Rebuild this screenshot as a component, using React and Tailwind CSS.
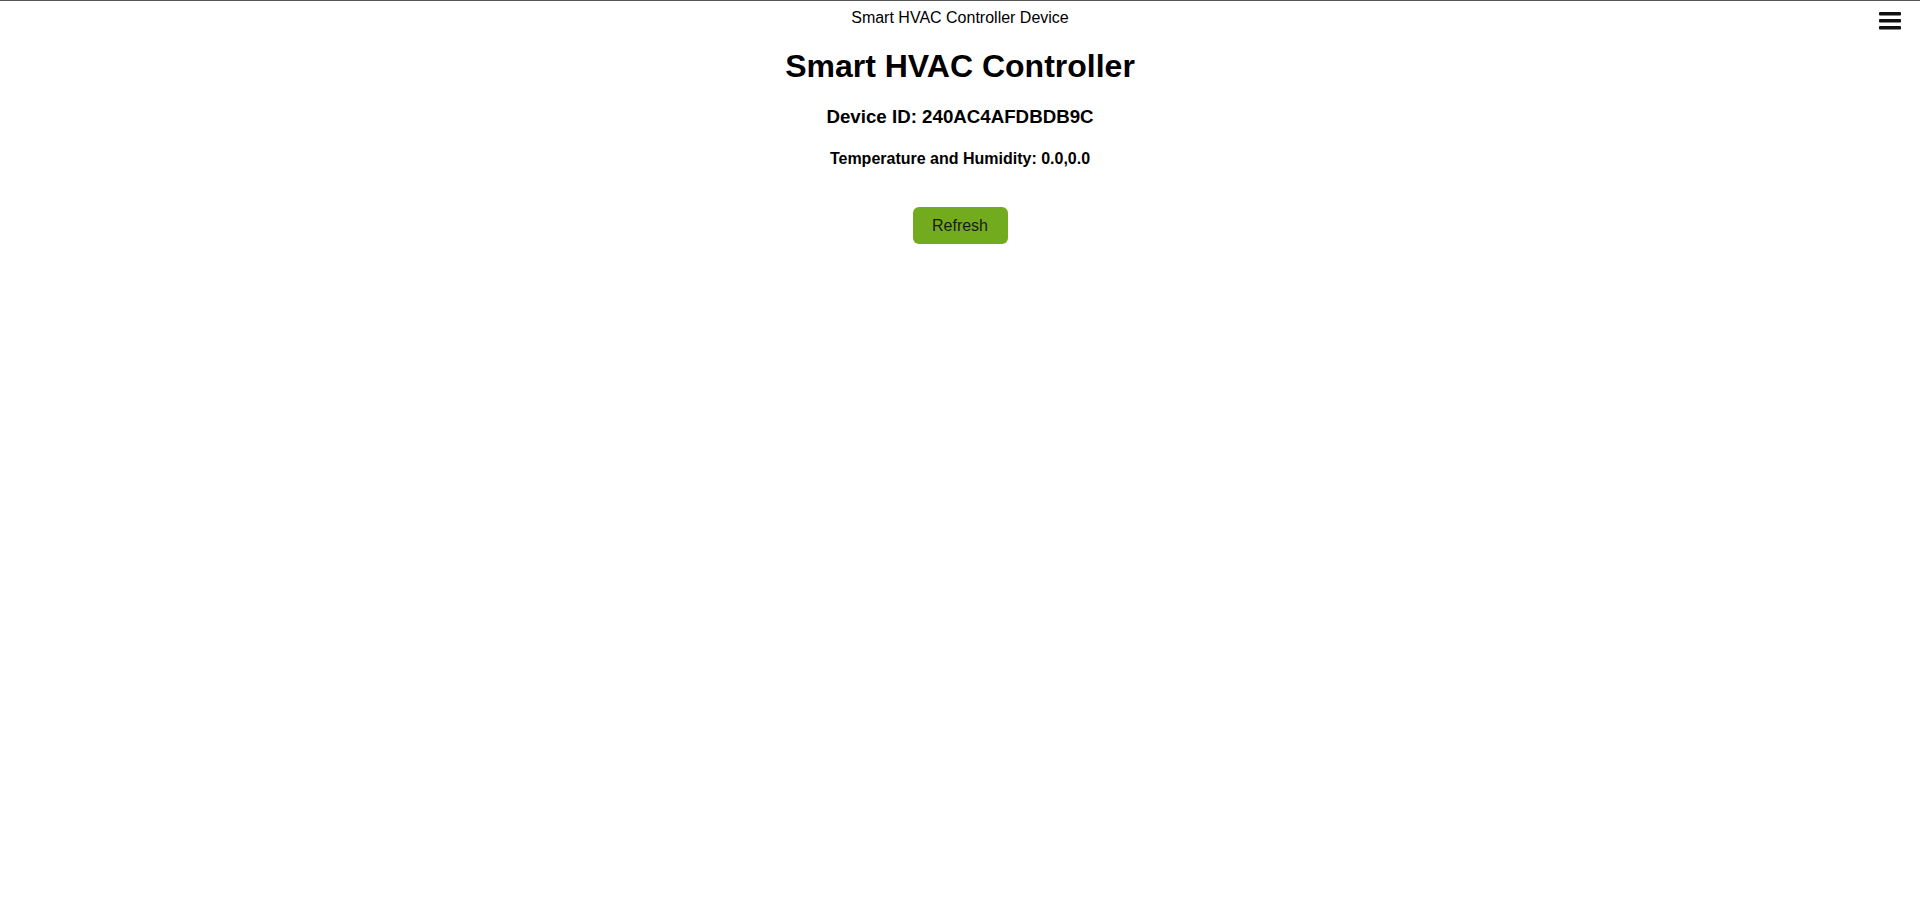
import React from "react";

function MenuIcon() {
  return (
    <svg width="22" height="19" viewBox="0 0 22 19" className="block">
      <rect x="0" y="0" width="22" height="3.5" rx="1" fill="#111" />
      <rect x="0" y="7" width="22" height="3.5" rx="1" fill="#111" />
      <rect x="0" y="14" width="22" height="3.5" rx="1" fill="#111" />
    </svg>
  );
}

export default function App() {
  return (
    <div
      className="min-h-screen bg-white text-black border-t border-[#555]"
      style={{ fontFamily: '"Liberation Sans", Arial, sans-serif' }}
    >
      <div className="relative pt-2">
        <p className="text-center text-base leading-[18px]">Smart HVAC Controller Device</p>
        <button className="absolute right-[19px] top-[11px]" aria-label="menu">
          <MenuIcon />
        </button>
      </div>
      <div className="flex flex-col items-center">
        <h1 className="mt-[21px] text-[32px] leading-[36px] font-bold">Smart HVAC Controller</h1>
        <h3 className="mt-[22px] text-[18.72px] leading-[21px] font-bold">Device ID: 240AC4AFDBDB9C</h3>
        <h4 className="mt-[23px] text-base leading-[18px] font-bold">Temperature and Humidity: 0.0,0.0</h4>
        <button className="mt-[39px] w-[95px] h-[37px] rounded-[6px] bg-[#73ab1f] text-base text-[#1a1a1a]">
          Refresh
        </button>
      </div>
    </div>
  );
}
